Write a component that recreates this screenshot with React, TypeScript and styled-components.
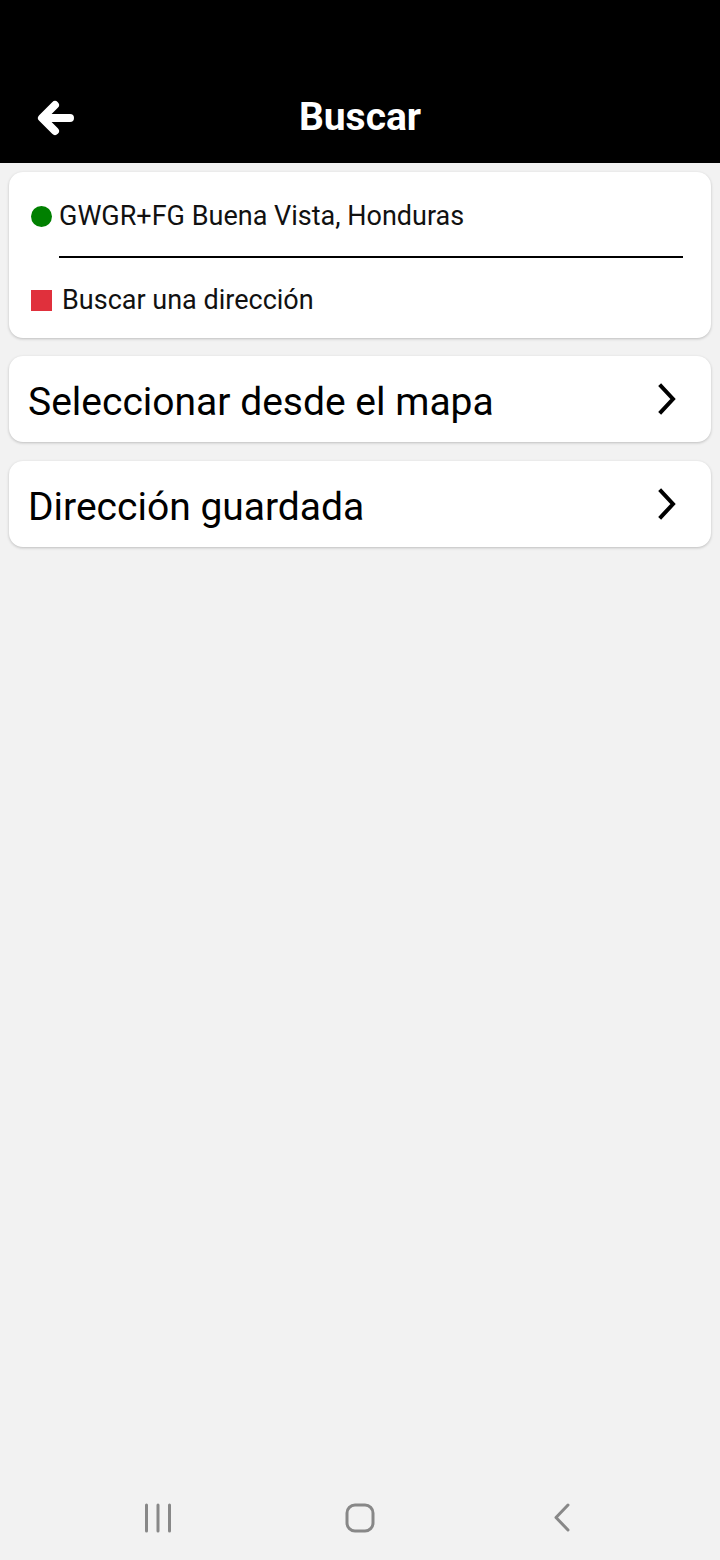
import React from 'react';
import styled, { createGlobalStyle } from 'styled-components';

const GlobalStyle = createGlobalStyle`
  html, body {
    margin: 0;
    padding: 0;
    background: #f2f2f2;
  }
  body {
    font-family: Roboto, "Noto Sans", Arial, sans-serif;
  }
`;

const Screen = styled.div`
  width: 720px;
  height: 1560px;
  display: flex;
  flex-direction: column;
  background: #f2f2f2;
`;

const Header = styled.header`
  height: 163px;
  background: #000;
  display: flex;
  align-items: flex-end;
  padding-bottom: 25px;
  box-sizing: border-box;
  position: relative;
`;

const BackButton = styled.button`
  width: 40px;
  height: 40px;
  margin-left: 36px;
  padding: 0;
  border: none;
  background: transparent;
  display: flex;
  align-items: center;
  justify-content: center;
  cursor: pointer;
`;

const Title = styled.h1`
  position: absolute;
  left: 0;
  right: 0;
  bottom: 24px;
  margin: 0;
  text-align: center;
  color: #fff;
  font-size: 39px;
  font-weight: 700;
  line-height: 44px;
  pointer-events: none;
`;

const Content = styled.main`
  flex: 1;
  display: flex;
  flex-direction: column;
  gap: 18px;
  padding: 9px 9px 0;
`;

const Card = styled.div`
  background: #fff;
  border-radius: 14px;
  box-shadow: 0 1px 3px rgba(0, 0, 0, 0.22);
`;

const RouteCard = styled(Card)`
  height: 166px;
  box-sizing: border-box;
  padding: 28px 28px 0 22px;
`;

const RouteRow = styled.div`
  display: flex;
  align-items: center;
  gap: 7px;
  font-size: 27px;
  line-height: 32px;
  color: #111;
`;

const Marker = styled.span<{ $round?: boolean; $color: string }>`
  width: 21px;
  height: 21px;
  border-radius: ${(p) => (p.$round ? '50%' : '0')};
  background: ${(p) => p.$color};
  flex-shrink: 0;
`;

const Divider = styled.div`
  height: 2px;
  background: #000;
  margin: 24px 0 26px 28px;
`;

const MenuCard = styled(Card)<{ $offset?: number }>`
  height: 86px;
  margin-top: ${(p) => p.$offset ?? 0}px;
  display: flex;
  align-items: center;
  justify-content: space-between;
  padding: 0 32px 0 19px;
  cursor: pointer;
`;

const MenuLabel = styled.span`
  font-size: 39px;
  color: #000;
  margin-top: 5px;
`;

const NavBar = styled.nav`
  height: 80px;
  display: flex;
  align-items: center;
  gap: 162px;
  padding: 0 0 4px 138px;
  box-sizing: border-box;
`;

const NavIcon = styled.div`
  width: 40px;
  height: 40px;
  display: flex;
  align-items: center;
  justify-content: center;
`;

const Chevron = () => (
  <svg width="22" height="32" viewBox="0 0 22 32">
    <path d="M4 3 L16 16 L4 29" fill="none" stroke="#000" strokeWidth="4" strokeLinecap="square" />
  </svg>
);

export default function App() {
  return (
    <Screen>
      <GlobalStyle />
      <Header>
        <BackButton aria-label="Volver">
          <svg width="40" height="40" viewBox="0 0 40 40">
            <path
              d="M34 20 H7 M19 7 L6 20 L19 33"
              fill="none"
              stroke="#fff"
              strokeWidth="8"
              strokeLinecap="round"
              strokeLinejoin="round"
            />
          </svg>
        </BackButton>
        <Title>Buscar</Title>
      </Header>
      <Content>
        <RouteCard>
          <RouteRow>
            <Marker $round $color="#008000" />
            <span>GWGR+FG Buena Vista, Honduras</span>
          </RouteRow>
          <Divider />
          <RouteRow>
            <Marker $color="#e0303c" />
            <span style={{ marginLeft: 3 }}>Buscar una dirección</span>
          </RouteRow>
        </RouteCard>
        <MenuCard>
          <MenuLabel>Seleccionar desde el mapa</MenuLabel>
          <Chevron />
        </MenuCard>
        <MenuCard $offset={1}>
          <MenuLabel>Dirección guardada</MenuLabel>
          <Chevron />
        </MenuCard>
      </Content>
      <NavBar>
        <NavIcon>
          <svg width="28" height="30" viewBox="0 0 28 30">
            <path d="M2.5 2 V28 M14 2 V28 M25.5 2 V28" stroke="#888" strokeWidth="3" strokeLinecap="round" />
          </svg>
        </NavIcon>
        <NavIcon>
          <svg width="30" height="30" viewBox="0 0 30 30">
            <rect x="2" y="2" width="26" height="26" rx="8" fill="none" stroke="#888" strokeWidth="3" />
          </svg>
        </NavIcon>
        <NavIcon>
          <svg width="20" height="30" viewBox="0 0 20 30">
            <path d="M16 2 L4 14.5 L16 27" fill="none" stroke="#888" strokeWidth="3" strokeLinecap="round" strokeLinejoin="round" />
          </svg>
        </NavIcon>
      </NavBar>
    </Screen>
  );
}
